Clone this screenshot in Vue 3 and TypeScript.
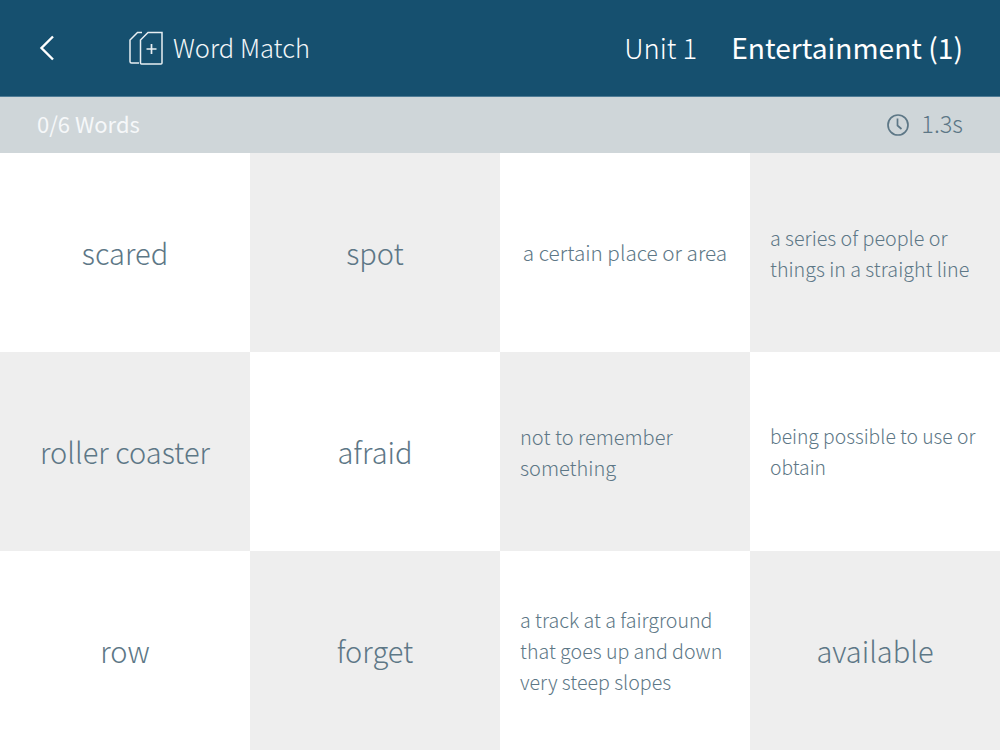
<script setup lang="ts">
interface Card {
  text: string
  size?: number
}

const cards: Card[] = [
  { text: 'scared' },
  { text: 'spot' },
  { text: 'a certain place or area', size: 20.7 },
  { text: 'a series of people or things in a straight line', size: 19.7 },
  { text: 'roller coaster' },
  { text: 'afraid' },
  { text: 'not to remember something', size: 20 },
  { text: 'being possible to use or obtain', size: 19.3 },
  { text: 'row' },
  { text: 'forget' },
  { text: 'a track at a fairground that goes up and down very steep slopes', size: 19.6 },
  { text: 'available' },
]

// checkerboard: row and column parity decide the shade
function isShaded(index: number) {
  return (Math.floor(index / 4) + (index % 4)) % 2 === 1
}
</script>

<template>
  <div class="screen">
    <header class="topbar">
      <div class="topbar-left">
        <svg class="back" width="18" height="28" viewBox="0 0 18 28" fill="none">
          <path d="M15 2.5 L3.5 14 L15 25.5" stroke="#fff" stroke-width="2.4" />
        </svg>
        <svg class="deck" width="36" height="36" viewBox="0 0 36 36" fill="none" stroke="#e8eef2" stroke-width="1.5">
          <path d="M11 33 H3.5 a1.5 1.5 0 0 1 -1.5 -1.5 V10 L9.5 2.5 H14" />
          <path d="M13.5 34 a1 1 0 0 1 -1 -1 V10 L20 2.5 H34 V33 a1 1 0 0 1 -1 1 Z" />
          <path d="M23.5 14 V24 M18.5 19 H28.5" stroke-width="1.7" />
        </svg>
        <span class="title">Word Match</span>
      </div>
      <div class="topbar-right">
        <span class="unit">Unit 1</span>
        <span class="lesson">Entertainment (1)</span>
      </div>
    </header>

    <div class="status">
      <span class="count">0/6 Words</span>
      <span class="timer">
        <svg width="24" height="24" viewBox="0 0 24 24" fill="none" stroke="#5d7786" stroke-width="1.7">
          <circle cx="12" cy="12" r="10" />
          <path d="M11.5 5.5 V12.5 L15.5 16" />
        </svg>
        <span>1.3s</span>
      </span>
    </div>

    <main class="grid">
      <div
        v-for="(card, i) in cards"
        :key="card.text"
        class="card"
        :class="{ shaded: isShaded(i), long: card.size }"
        :style="card.size ? { fontSize: card.size + 'px' } : undefined"
      >
        <div>{{ card.text }}</div>
      </div>
    </main>
  </div>
</template>

<style>
html,
body {
  margin: 0;
  background: #fff;
}
</style>

<style scoped>
.screen {
  width: 1000px;
  height: 750px;
  display: flex;
  flex-direction: column;
  overflow: hidden;
  font-family: "Noto Sans CJK JP", "Noto Sans", sans-serif;
  font-weight: 300;
}

.topbar {
  flex: none;
  box-sizing: border-box;
  height: 97px;
  padding: 0 37px 0 38px;
  background: #16506f;
  border-bottom: 1px solid #4f7c96;
  display: flex;
  align-items: center;
  justify-content: space-between;
  color: #fff;
}

.topbar-left {
  display: flex;
  align-items: center;
}

.back {
  margin-right: 72px;
}

.deck {
  margin-right: 9px;
}

.title {
  font-size: 25.5px;
  color: #f2f6f8;
  padding-bottom: 3px;
}

.topbar-right {
  display: flex;
  align-items: baseline;
  gap: 34px;
  padding-bottom: 3px;
}

.unit {
  font-size: 27.4px;
}

.lesson {
  font-size: 28.2px;
  font-weight: 400;
}

.status {
  height: 56px;
  flex: none;
  padding: 0 37px;
  background: #cfd6d9;
  display: flex;
  align-items: center;
  justify-content: space-between;
}

.count {
  font-size: 22px;
  font-weight: 400;
  color: #f6f8f9;
  padding-bottom: 4px;
}

.timer {
  display: flex;
  align-items: center;
  gap: 11px;
  font-size: 23.5px;
  color: #5d7786;
}

.timer span {
  padding-bottom: 4px;
}

.grid {
  flex: 1;
  display: grid;
  grid-template-columns: repeat(4, 250px);
  grid-template-rows: repeat(3, 199px);
}

.card {
  box-sizing: border-box;
  padding: 0 20px 2px;
  display: flex;
  align-items: center;
  justify-content: center;
  background: #fff;
  color: #5d7786;
  font-size: 29px;
}

.card.shaded {
  background: #eeeeee;
}

.card.long {
  line-height: 31px;
  padding-bottom: 0;
}
</style>
